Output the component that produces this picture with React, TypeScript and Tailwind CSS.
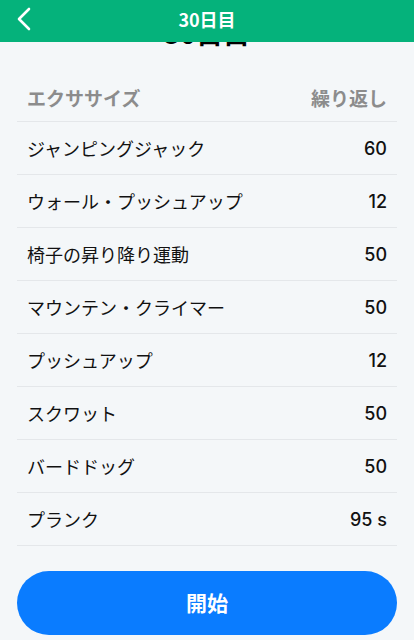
import React from "react";

const rows: [string, string][] = [
  ["ジャンピングジャック", "60"],
  ["ウォール・プッシュアップ", "12"],
  ["椅子の昇り降り運動", "50"],
  ["マウンテン・クライマー", "50"],
  ["プッシュアップ", "12"],
  ["スクワット", "50"],
  ["バードドッグ", "50"],
  ["プランク", "95 s"],
];

const font = { fontFamily: '"Noto Sans CJK JP", "Noto Sans", sans-serif' };

export default function App() {
  return (
    <div className="relative min-h-[640px] w-[414px] overflow-hidden bg-[#f4f7f9]" style={font}>
      <div className="absolute left-0 top-0 z-10 flex h-[42px] w-full items-center justify-center bg-[#05b27b] pb-[5px]">
        <svg className="absolute left-[15px] top-[7px]" width="18" height="24" viewBox="0 0 18 24" fill="none">
          <path d="M14 2 L4 12 L14 22" stroke="white" strokeWidth="2.6" strokeLinecap="round" strokeLinejoin="round" />
        </svg>
        <span className="text-[18px] font-semibold leading-none text-white">30日目</span>
      </div>
      <div className="px-[17px] pt-[16px]">
        <div className="text-center text-[27px] font-bold leading-[34px] text-black">30日目</div>
        <div className="mt-[25px] flex h-[47px] items-center justify-between border-b border-[#e4e7ea] px-[10px] text-[19px] font-bold text-[#8c8c8c]">
          <span>エクササイズ</span>
          <span>繰り返し</span>
        </div>
        {rows.map(([name, reps]) => (
          <div
            key={name}
            className="flex h-[53px] items-center justify-between border-b border-[#e4e7ea] px-[10px] text-[18px] text-[#111]"
          >
            <span>{name}</span>
            <span className="font-medium" style={{ fontFamily: '"Inter", "Noto Sans", sans-serif' }}>{reps}</span>
          </div>
        ))}
        <button className="mt-[25px] flex h-[64px] w-full items-center justify-center rounded-full bg-[#0a7cff] text-[21px] font-bold text-white">
          開始
        </button>
      </div>
    </div>
  );
}
